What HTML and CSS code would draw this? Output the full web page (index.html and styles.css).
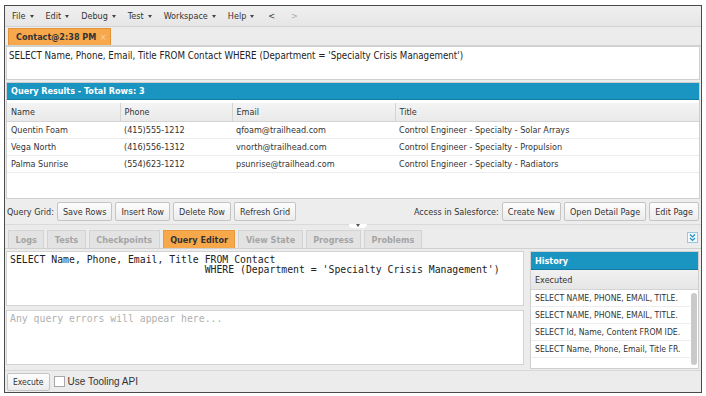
FILE: index.html
```html
<!DOCTYPE html>
<html lang="en">
<head>
    <meta charset="UTF-8">
    <title>Developer Console - Query Editor</title>
    <link rel="stylesheet" href="styles.css">
</head>
<body>
    <div class="console">
        <!-- top menu -->
        <div class="menubar">
            <span class="menu">File <i class="caret"></i></span>
            <span class="menu">Edit <i class="caret"></i></span>
            <span class="menu">Debug <i class="caret"></i></span>
            <span class="menu">Test <i class="caret"></i></span>
            <span class="menu">Workspace <i class="caret"></i></span>
            <span class="menu">Help <i class="caret"></i></span>
            <span class="menu nav">&lt;</span>
            <span class="menu nav off">&gt;</span>
        </div>

        <div class="filetabs">
            <span class="filetab">Contact@2:38 PM <span class="close">&#215;</span></span>
        </div>

        <div class="querybox">SELECT Name, Phone, Email, Title FROM Contact WHERE (Department = 'Specialty Crisis Management')</div>

        <div class="results">
            <div class="panel-title">Query Results - Total Rows: 3</div>
            <table class="grid">
                <thead>
                    <tr><th class="c1">Name</th><th class="c2">Phone</th><th class="c3">Email</th><th>Title</th></tr>
                </thead>
                <tbody id="rows"></tbody>
            </table>
        </div>

        <div class="gridbar">
            <div class="group">
                <span class="label">Query Grid:</span>
                <button>Save Rows</button>
                <button>Insert Row</button>
                <button>Delete Row</button>
                <button>Refresh Grid</button>
            </div>
            <div class="group">
                <span class="label">Access in Salesforce:</span>
                <button>Create New</button>
                <button>Open Detail Page</button>
                <button>Edit Page</button>
            </div>
        </div>

        <div class="splitter"><span class="grip"></span></div>

        <div class="paneltabs">
            <span class="ptab">Logs</span>
            <span class="ptab">Tests</span>
            <span class="ptab">Checkpoints</span>
            <span class="ptab active">Query Editor</span>
            <span class="ptab">View State</span>
            <span class="ptab">Progress</span>
            <span class="ptab">Problems</span>
            <span class="collapse">
                <svg width="9" height="9" viewBox="0 0 9 9"><path d="M2 1.5 L4.5 4 L7 1.5 M2 5 L4.5 7.5 L7 5" fill="none" stroke="#1b8fc4" stroke-width="1.2"/></svg>
            </span>
        </div>

        <div class="editor">
            <div class="editor-main">
                <pre class="code">SELECT Name, Phone, Email, Title FROM Contact
                                 WHERE (Department = 'Specialty Crisis Management')</pre>
                <pre class="code errors">Any query errors will appear here...</pre>
            </div>
            <div class="history">
                <div class="panel-title">History</div>
                <div class="hist-sub">Executed</div>
                <div class="hist-list">
                    <div class="hist-items" id="history"></div>
                    <div class="scroll"><span class="thumb"></span></div>
                </div>
            </div>
        </div>

        <div class="footer">
            <button>Execute</button>
            <label class="tooling"><span class="box"></span>Use Tooling API</label>
        </div>
    </div>

    <script>
        const contacts = [
            { name: "Quentin Foam", phone: "(415)555-1212", email: "qfoam@trailhead.com", title: "Control Engineer - Specialty - Solar Arrays" },
            { name: "Vega North", phone: "(416)556-1312", email: "vnorth@trailhead.com", title: "Control Engineer - Specialty - Propulsion" },
            { name: "Palma Sunrise", phone: "(554)623-1212", email: "psunrise@trailhead.com", title: "Control Engineer - Specialty - Radiators" }
        ];

        // history entries are shown cut short, as the console does
        const history = [
            "SELECT NAME, PHONE, EMAIL, TITLE.",
            "SELECT NAME, PHONE, EMAIL, TITLE.",
            "SELECT Id, Name, Content FROM IDE.",
            "SELECT Name, Phone, Email, Title FR."
        ];

        const rows = document.getElementById("rows");
        contacts.forEach(c => {
            const tr = document.createElement("tr");
            [c.name, c.phone, c.email, c.title].forEach(v => {
                const td = document.createElement("td");
                td.textContent = v;
                tr.appendChild(td);
            });
            rows.appendChild(tr);
        });

        const list = document.getElementById("history");
        history.forEach(q => {
            const div = document.createElement("div");
            div.className = "hist-item";
            div.textContent = q;
            list.appendChild(div);
        });
    </script>
</body>
</html>
```

FILE: styles.css
```css
* {
    margin: 0;
    padding: 0;
    box-sizing: border-box;
}

body {
    background: #ffffff;
    padding: 5px 0 0 4px;
    font-family: 'DejaVu Sans Condensed', 'DejaVu Sans', sans-serif;
    font-size: 9px;
    color: #222;
}

.console {
    width: 698px;
    height: 388px;
    border: 1px solid #4a4a4a;
    background: #ececec;
    display: flex;
    flex-direction: column;
}

/* menu bar */
.menubar {
    height: 21px;
    display: flex;
    align-items: center;
    padding-left: 7px;
    gap: 12px;
    background: linear-gradient(#f0f0f0, #e6e6e6);
    border-bottom: 1px solid #d2d2d2;
}

.menu {
    color: #333;
    display: flex;
    align-items: center;
    gap: 4px;
}

.caret {
    width: 0;
    height: 0;
    border-left: 2.5px solid transparent;
    border-right: 2.5px solid transparent;
    border-top: 3px solid #444;
}

.menu.nav {
    padding: 0 2px;
}

.menu.off {
    color: #aaa;
}

/* file tabs */
.filetabs {
    height: 19px;
    padding: 1px 0 0 3px;
    background: #ececec;
    border-bottom: 1px solid #d2d2d2;
    display: flex;
    align-items: flex-end;
}

.filetab {
    height: 17px;
    padding: 0 4px 0 7px;
    background: #f7a84b;
    border: 1px solid #e3913a;
    border-bottom: none;
    font-weight: bold;
    color: #333;
    display: flex;
    align-items: center;
    gap: 4px;
}

.filetab .close {
    font-size: 8px;
    color: #f5d9b8;
    font-weight: normal;
}

.querybox {
    margin: 0 1px;
    height: 34px;
    background: #fff;
    border: 1px solid #d0d0d0;
    padding: 3px 2px;
    font-size: 9.7px;
    color: #222;
}

/* query results */
.results {
    margin: 2px 1px 0 1px;
    height: 117px;
    background: #fff;
    border: 1px solid #cfcfcf;
}

.panel-title {
    background: #1a95c1;
    color: #fff;
    font-weight: bold;
    height: 17px;
    line-height: 17px;
    padding-left: 4px;
    border-bottom: 1px solid #147aa0;
}

.grid {
    width: 100%;
    border-collapse: collapse;
    margin-top: 3px;
}

.grid th {
    text-align: left;
    font-weight: normal;
    background: linear-gradient(#f4f4f4, #e9e9e9);
    border-right: 1px solid #d4d4d4;
    border-bottom: 1px solid #d4d4d4;
    height: 18px;
    padding-left: 4px;
    color: #333;
}

.grid th:last-child {
    border-right: none;
}

.grid .c1 { width: 113px; }
.grid .c2 { width: 112px; }
.grid .c3 { width: 163px; }

.grid td {
    height: 17px;
    padding-left: 4px;
    border-bottom: 1px solid #ececec;
    color: #333;
}

/* grid toolbar */
.gridbar {
    height: 25px;
    display: flex;
    justify-content: space-between;
    align-items: center;
    padding: 0 2px 0 2px;
    background: #ededed;
}

.group {
    display: flex;
    align-items: center;
    gap: 3px;
}

.label {
    color: #333;
}

button {
    font-family: inherit;
    font-size: 9px;
    color: #333;
    height: 19px;
    padding: 0 5px;
    background: linear-gradient(#fdfdfd, #ececec);
    border: 1px solid #c4c4c4;
    border-radius: 2px;
}

.splitter {
    height: 5px;
    background: #eaeaea;
    border-top: 1px solid #dadada;
    position: relative;
}

.grip {
    position: absolute;
    left: 344px;
    top: -1px;
    width: 18px;
    height: 4px;
    background: #fff;
    border-radius: 0 0 4px 4px;
}

.grip::after {
    content: '';
    position: absolute;
    left: 7px;
    top: 0;
    border-left: 2px solid transparent;
    border-right: 2px solid transparent;
    border-top: 3px solid #555;
}

/* bottom panel tabs */
.paneltabs {
    height: 20px;
    display: flex;
    align-items: flex-end;
    padding-left: 3px;
    gap: 3px;
    border-bottom: 1px solid #d0d0d0;
}

.ptab {
    height: 18px;
    line-height: 18px;
    padding: 0 6.5px;
    background: #e3e3e3;
    border: 1px solid #d3d3d3;
    border-bottom: none;
    font-weight: bold;
    color: #a5a5a5;
}

.ptab.active {
    background: #f7a84b;
    color: #333;
    border-color: #e8983f;
}

.collapse {
    margin-left: auto;
    margin-right: 3px;
    margin-bottom: 5px;
    width: 11px;
    height: 11px;
    border: 1px solid #9cc6dc;
    background: #f4f9fc;
    display: flex;
    align-items: center;
    justify-content: center;
}

/* editor area */
.editor {
    flex: 1;
    display: flex;
    gap: 6px;
    padding: 2px 2px 0 1px;
}

.editor-main {
    width: 518px;
    display: flex;
    flex-direction: column;
    gap: 4px;
}

.code {
    font-family: 'DejaVu Sans Mono', monospace;
    font-size: 9.8px;
    line-height: 10px;
    background: #fff;
    border: 1px solid #d3d3d3;
    height: 55px;
    padding: 3px 3px;
    color: #222;
}

.code.errors {
    color: #b0b0b0;
}

.history {
    flex: 1;
    background: #fff;
    border: 1px solid #cfcfcf;
    display: flex;
    flex-direction: column;
    margin-bottom: 1px;
}

.history .panel-title {
    height: 18px;
    line-height: 18px;
}

.hist-sub {
    height: 20px;
    line-height: 20px;
    padding-left: 4px;
    background: linear-gradient(#f1f1f1, #e6e6e6);
    border-bottom: 1px solid #d4d4d4;
    color: #333;
}

.hist-list {
    flex: 1;
    display: flex;
}

.hist-items {
    flex: 1;
}

.hist-item {
    height: 17px;
    line-height: 17px;
    padding-left: 4px;
    white-space: nowrap;
    font-size: 8.6px;
    border-bottom: 1px solid #ececec;
    color: #333;
}

.scroll {
    width: 8px;
    padding: 3px 1px;
}

.thumb {
    display: block;
    height: 72px;
    background: #c9c9c9;
    border-radius: 4px;
}

/* footer */
.footer {
    height: 22px;
    display: flex;
    align-items: center;
    padding-left: 2px;
    gap: 4px;
    border-top: 1px solid #d8d8d8;
}

.footer button {
    height: 18px;
    font-size: 8.5px;
}

.tooling {
    display: flex;
    align-items: center;
    gap: 3px;
    font-family: 'Liberation Sans', Arial, sans-serif;
    font-size: 10px;
    color: #333;
}

.box {
    width: 11px;
    height: 11px;
    background: #fff;
    border: 1px solid #a8a8a8;
}
```
